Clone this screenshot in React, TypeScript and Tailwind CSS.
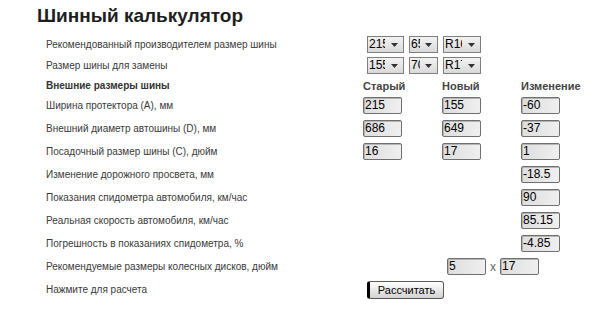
import React from 'react';

const font = { fontFamily: '"Liberation Sans", Arial, sans-serif' };

// native-looking select: clipped value + little arrow button
const FakeSelect = ({ value, w, textW }: { value: string; w: string; textW: string }) => (
  <div className={`flex h-[17px] ${w} items-center border border-[#7f7f7f] bg-gradient-to-b from-[#f2f2f2] to-[#dadada]`}>
    <span className={`${textW} overflow-hidden whitespace-nowrap pl-[1px] text-[12px] leading-[15px] text-black`}>
      {value}
    </span>
    <span className="flex flex-1 items-center justify-center">
      <svg width="7" height="4" viewBox="0 0 7 4">
        <path d="M0 0h7L3.5 4z" fill="#333" />
      </svg>
    </span>
  </div>
);

const Field = ({ value, w = 'w-[39px]' }: { value: string; w?: string }) => (
  <div
    className={`flex h-[17px] ${w} items-center rounded-[2px] border border-[#6f6f6f] bg-gradient-to-r from-[#dedede] to-[#efefef] pl-[1px] text-[12px] leading-[15px] text-black shadow-[inset_1px_1px_0_#b5b5b5]`}
  >
    {value}
  </div>
);

const Row = ({ label, children, h = 'h-[23px]', bold }: { label: string; children?: React.ReactNode; h?: string; bold?: boolean }) => (
  <div className={`flex ${h} items-center`}>
    <div className={`w-[321px] text-[10px] ${bold ? 'font-bold text-[#333]' : 'text-[#3a3a3a]'}`}>{label}</div>
    {children}
  </div>
);

const Cell = ({ children }: { children?: React.ReactNode }) => <div className="w-[80px]">{children}</div>;

const dataRows: { label: string; vals: (string | null)[] }[] = [
  { label: 'Ширина протектора (A), мм', vals: ['215', '155', '-60'] },
  { label: 'Внешний диаметр автошины (D), мм', vals: ['686', '649', '-37'] },
  { label: 'Посадочный размер шины (C), дюйм', vals: ['16', '17', '1'] },
  { label: 'Изменение дорожного просвета, мм', vals: [null, null, '-18.5'] },
  { label: 'Показания спидометра автомобиля, км/час', vals: [null, null, '90'] },
  { label: 'Реальная скорость автомобиля, км/час', vals: [null, null, '85.15'] },
  { label: 'Погрешность в показаниях спидометра, %', vals: [null, null, '-4.85'] },
];

export default function App() {
  return (
    <div className="h-[325px] w-[600px] overflow-hidden bg-white pl-[37px] pt-[4px]" style={font}>
      <h1 className="h-[30px] text-[19px] font-bold leading-[24px] text-[#1e1e1e]">Шинный калькулятор</h1>

      <div className="pl-[9px]">
        <Row label="Рекомендованный производителем размер шины" h="h-[21px]">
          <div className="flex gap-[5px]">
            <FakeSelect value="215" w="w-[37px]" textW="w-[17px]" />
            <FakeSelect value="65" w="w-[29px]" textW="w-[10px]" />
            <FakeSelect value="R16" w="w-[38px]" textW="w-[18px]" />
          </div>
        </Row>
        <Row label="Размер шины для замены" h="h-[21px]">
          <div className="flex gap-[5px]">
            <FakeSelect value="155" w="w-[37px]" textW="w-[17px]" />
            <FakeSelect value="70" w="w-[29px]" textW="w-[10px]" />
            <FakeSelect value="R17" w="w-[38px]" textW="w-[18px]" />
          </div>
        </Row>
        <Row label="Внешние размеры шины" h="h-[18px]" bold>
          <Cell><span className="text-[11px] font-bold text-[#444]">Старый</span></Cell>
          <Cell><span className="text-[11px] font-bold text-[#444]">Новый</span></Cell>
          <Cell><span className="text-[11px] font-bold text-[#444]">Изменение</span></Cell>
        </Row>

        {dataRows.map((r) => (
          <Row key={r.label} label={r.label}>
            {r.vals.map((v, i) => (
              <Cell key={i}>{v !== null && <Field value={v} />}</Cell>
            ))}
          </Row>
        ))}

        <Row label="Рекомендуемые размеры колесных дисков, дюйм">
          <Cell />
          <div className="flex items-center">
            <Field value="5" />
            <span className="mx-[4px] text-[12px] text-[#666]">x</span>
            <Field value="17" />
          </div>
        </Row>
        <Row label="Нажмите для расчета">
          <button className="h-[18px] w-[77px] rounded-[3px] border border-[#5a5a5a] border-l-[3px] border-l-black bg-gradient-to-b from-white to-[#d2d2d2] text-[11px] leading-[14px] text-black">
            Рассчитать
          </button>
        </Row>
      </div>
    </div>
  );
}
